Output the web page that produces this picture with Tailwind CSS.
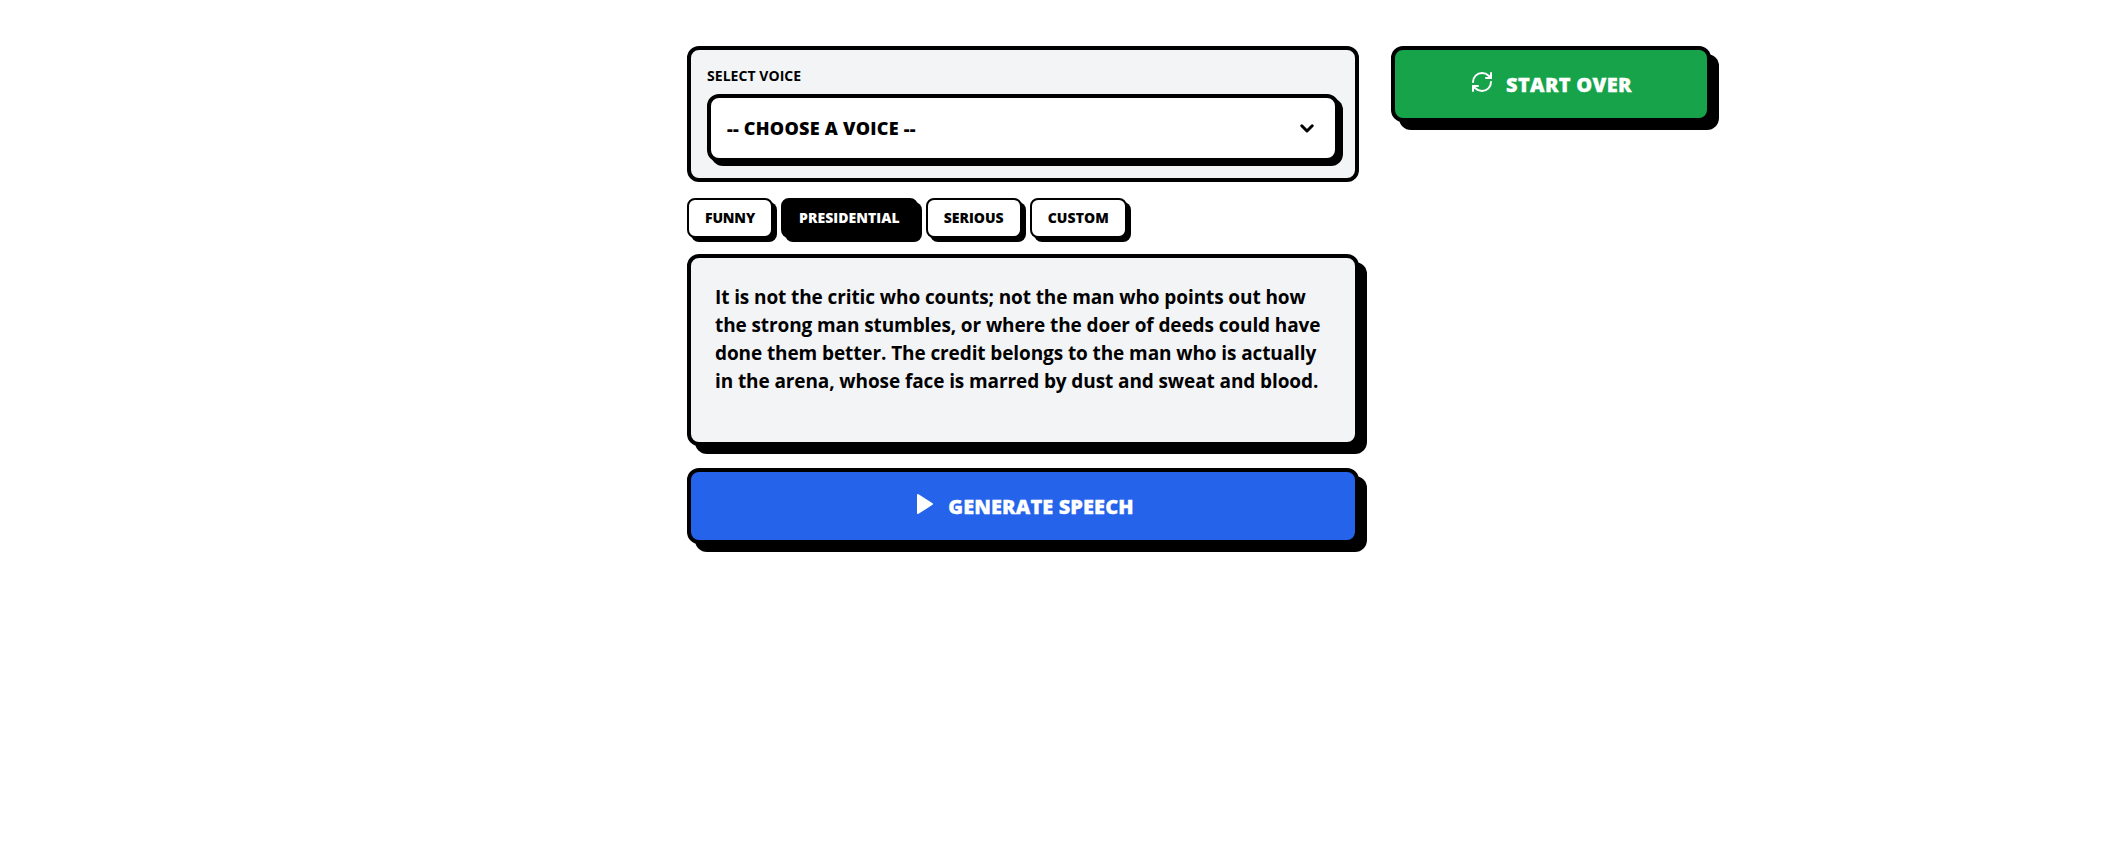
<!DOCTYPE html>
<html><head><meta charset="utf-8"><script src="https://cdn.jsdelivr.net/npm/@tailwindcss/browser@4"></script></head>
<body class="bg-white text-black font-['Open_Sans','Noto_Sans',sans-serif]">
<div class="min-h-[863px] flex items-start gap-8 pl-[687px] pt-[46px]">
  <div class="w-[672px] flex flex-col">
    <div class="bg-[#f3f4f6] border-4 border-black rounded-xl p-4">
      <div class="text-sm font-bold leading-5 mb-2 tracking-[0.05px]">SELECT VOICE</div>
      <div class="flex items-center justify-between h-[68px] bg-white border-4 border-black rounded-xl shadow-[4px_4px_0_0_#000] px-4">
        <span class="text-lg font-extrabold tracking-[0.25px]">-- CHOOSE A VOICE --</span>
        <svg class="w-[18px] h-[18px] mr-[3px]" viewBox="0 0 24 24" fill="none" stroke="#000" stroke-width="4" stroke-linecap="round" stroke-linejoin="round"><path d="M5 9l7 7 7-7"/></svg>
      </div>
    </div>
    <div class="flex gap-2 mt-4">
      <button class="h-10 px-4 bg-white border-2 border-black rounded-lg shadow-[4px_4px_0_0_#000] text-sm font-extrabold tracking-[-0.15px]">FUNNY</button>
      <button class="h-10 px-4 bg-black text-white border-2 border-black rounded-lg shadow-[4px_4px_0_0_#000] text-sm font-extrabold tracking-[0.05px]">PRESIDENTIAL</button>
      <button class="h-10 px-4 bg-white border-2 border-black rounded-lg shadow-[4px_4px_0_0_#000] text-sm font-extrabold">SERIOUS</button>
      <button class="h-10 px-4 bg-white border-2 border-black rounded-lg shadow-[4px_4px_0_0_#000] text-sm font-extrabold tracking-[0.1px]">CUSTOM</button>
    </div>
    <div class="mt-4 h-[192px] bg-[#f3f4f6] border-4 border-black rounded-xl shadow-[8px_8px_0_0_#000] px-6 pt-[25px] text-[19px] leading-7 font-bold tracking-[-0.1px] whitespace-nowrap">It is not the critic who counts; not the man who points out how<br>the strong man stumbles, or where the doer of deeds could have<br>done them better. The credit belongs to the man who is actually<br>in the arena, whose face is marred by dust and sweat and blood.</div>
    <button class="mt-[22px] h-[76px] pt-[2px] flex items-center justify-center gap-3 bg-[#2563eb] text-white border-4 border-black rounded-xl shadow-[8px_8px_0_0_#000] text-xl font-extrabold tracking-[0.1px] [-webkit-text-stroke:0.3px_#fff]">
      <svg class="w-6 h-6 -mt-[6px]" viewBox="0 0 24 24" fill="#fff" stroke="#fff" stroke-width="2" stroke-linejoin="round"><path d="M6 3l14 9-14 9z"/></svg>GENERATE SPEECH
    </button>
  </div>
  <button class="w-[320px] h-[76px] pt-[2px] flex items-center justify-center gap-3 bg-[#16a34a] text-white border-4 border-black rounded-xl shadow-[8px_8px_0_0_#000] text-xl font-extrabold tracking-[0.3px] [-webkit-text-stroke:0.3px_#fff]">
    <svg class="w-6 h-6 -mt-[6px]" viewBox="0 0 24 24" fill="none" stroke="#fff" stroke-width="2" stroke-linecap="round" stroke-linejoin="round"><path d="M3 12a9 9 0 0 1 9-9 9.75 9.75 0 0 1 6.74 2.74L21 8"/><path d="M21 3v5h-5"/><path d="M21 12a9 9 0 0 1-9 9 9.75 9.75 0 0 1-6.74-2.74L3 16"/><path d="M8 16H3v5"/></svg>START OVER
  </button>
</div>
</body></html>
